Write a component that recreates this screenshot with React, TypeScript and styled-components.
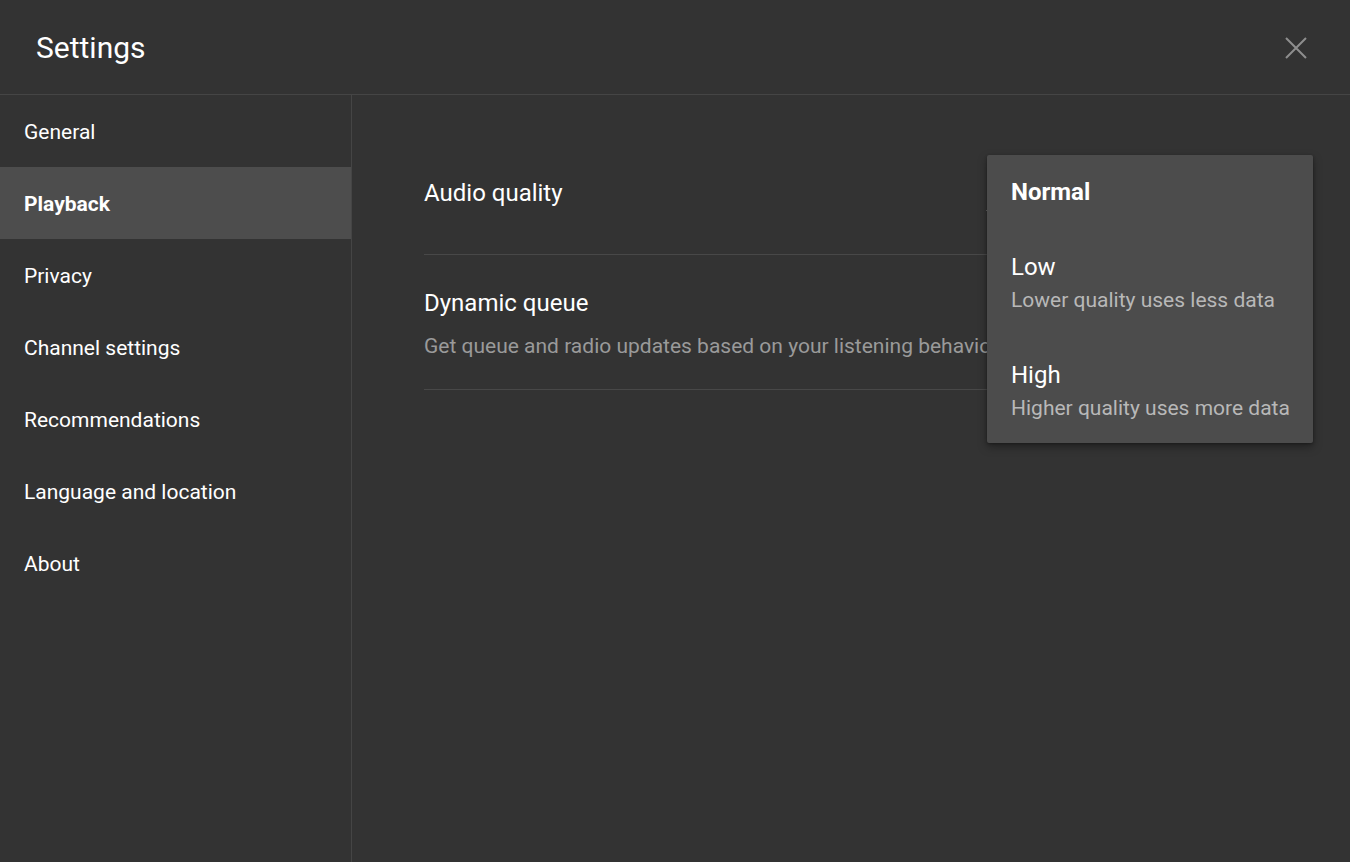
import { createGlobalStyle } from 'styled-components';
import styled from 'styled-components';

const GlobalStyle = createGlobalStyle`
  html, body {
    margin: 0;
    padding: 0;
    background: #333333;
    font-family: Roboto, "Noto Sans", Arial, sans-serif;
    color: #fff;
  }
`;

const Page = styled.div`
  width: 1350px;
  height: 862px;
  display: flex;
  flex-direction: column;
  background: #333333;
  overflow: hidden;
`;

const Header = styled.header`
  height: 92px;
  flex: none;
  display: flex;
  align-items: center;
  justify-content: space-between;
  padding: 2px 36px 0 36px;
  border-bottom: 1px solid #454545;
`;

const Title = styled.h1`
  margin: 0;
  font-size: 30px;
  font-weight: 400;
  line-height: 36px;
  color: #fff;
`;

const CloseButton = styled.button`
  width: 36px;
  height: 36px;
  padding: 0;
  border: 0;
  background: none;
  display: flex;
  align-items: center;
  justify-content: center;
  cursor: pointer;
`;

const Body = styled.div`
  flex: 1;
  display: flex;
  min-height: 0;
`;

const Sidebar = styled.nav`
  width: 351px;
  flex: none;
  border-right: 1px solid #454545;
  display: flex;
  flex-direction: column;
`;

const NavItem = styled.div<{ $active?: boolean }>`
  height: 72px;
  box-sizing: border-box;
  display: flex;
  align-items: center;
  padding: 2px 0 0 24px;
  font-size: 21px;
  font-weight: ${(p) => (p.$active ? 700 : 400)};
  background: ${(p) => (p.$active ? '#4d4d4d' : 'transparent')};
  color: #fff;
`;

const Content = styled.main`
  flex: 1;
  position: relative;
  padding: 50px 72px 0 72px;
`;

const Row = styled.div<{ $pad: string }>`
  display: flex;
  align-items: flex-start;
  justify-content: space-between;
  padding: ${(p) => p.$pad};
  border-bottom: 1px solid #484848;
`;

const RowText = styled.div`
  display: flex;
  flex-direction: column;
  gap: 19px;
  white-space: nowrap;
`;

const RowTitle = styled.div`
  font-size: 24px;
  line-height: 24px;
  color: #fff;
`;

const RowDesc = styled.div`
  font-size: 21px;
  line-height: 24px;
  color: #9a9a9a;
`;

const Select = styled.div`
  width: 292px;
  height: 29px;
  margin-bottom: -6px;
  border-bottom: 1px solid #6a6a6a;
`;

const Menu = styled.div`
  position: absolute;
  left: 635px;
  top: 60px;
  width: 326px;
  background: #4c4c4c;
  border-radius: 2px;
  box-shadow: 0 4px 10px rgba(0, 0, 0, 0.35), 0 1px 3px rgba(0, 0, 0, 0.3);
  display: flex;
  flex-direction: column;
`;

const Option = styled.div<{ $pad: string }>`
  padding: ${(p) => p.$pad};
  display: flex;
  flex-direction: column;
  gap: 9px;
`;

const OptionTitle = styled.div<{ $selected?: boolean }>`
  font-size: 24px;
  line-height: 24px;
  font-weight: ${(p) => (p.$selected ? 700 : 400)};
  color: #fff;
`;

const OptionDesc = styled.div`
  font-size: 21px;
  line-height: 24px;
  color: #b8b8b8;
  white-space: nowrap;
`;

const navItems = [
  'General',
  'Playback',
  'Privacy',
  'Channel settings',
  'Recommendations',
  'Language and location',
  'About',
];

const options = [
  { label: 'Low', desc: 'Lower quality uses less data' },
  { label: 'High', desc: 'Higher quality uses more data' },
];

export default function App() {
  return (
    <>
      <GlobalStyle />
      <Page>
        <Header>
          <Title>Settings</Title>
          <CloseButton aria-label="Close">
            <svg width="24" height="24" viewBox="0 0 24 24">
              <path d="M2 2 L22 22 M22 2 L2 22" stroke="#8e8e8e" strokeWidth="2" fill="none" />
            </svg>
          </CloseButton>
        </Header>
        <Body>
          <Sidebar>
            {navItems.map((item) => (
              <NavItem key={item} $active={item === 'Playback'}>
                {item}
              </NavItem>
            ))}
          </Sidebar>
          <Content>
            <Row $pad="36px 0 49px">
              <RowText>
                <RowTitle>Audio quality</RowTitle>
              </RowText>
              <Select />
            </Row>
            <Row $pad="36px 0 31px">
              <RowText>
                <RowTitle>Dynamic queue</RowTitle>
                <RowDesc>Get queue and radio updates based on your listening behavior</RowDesc>
              </RowText>
            </Row>
            <Menu>
              <Option $pad="25px 24px 23px">
                <OptionTitle $selected>Normal</OptionTitle>
              </Option>
              {options.map((o) => (
                <Option key={o.label} $pad="28px 24px 23px">
                  <OptionTitle>{o.label}</OptionTitle>
                  <OptionDesc>{o.desc}</OptionDesc>
                </Option>
              ))}
            </Menu>
          </Content>
        </Body>
      </Page>
    </>
  );
}
